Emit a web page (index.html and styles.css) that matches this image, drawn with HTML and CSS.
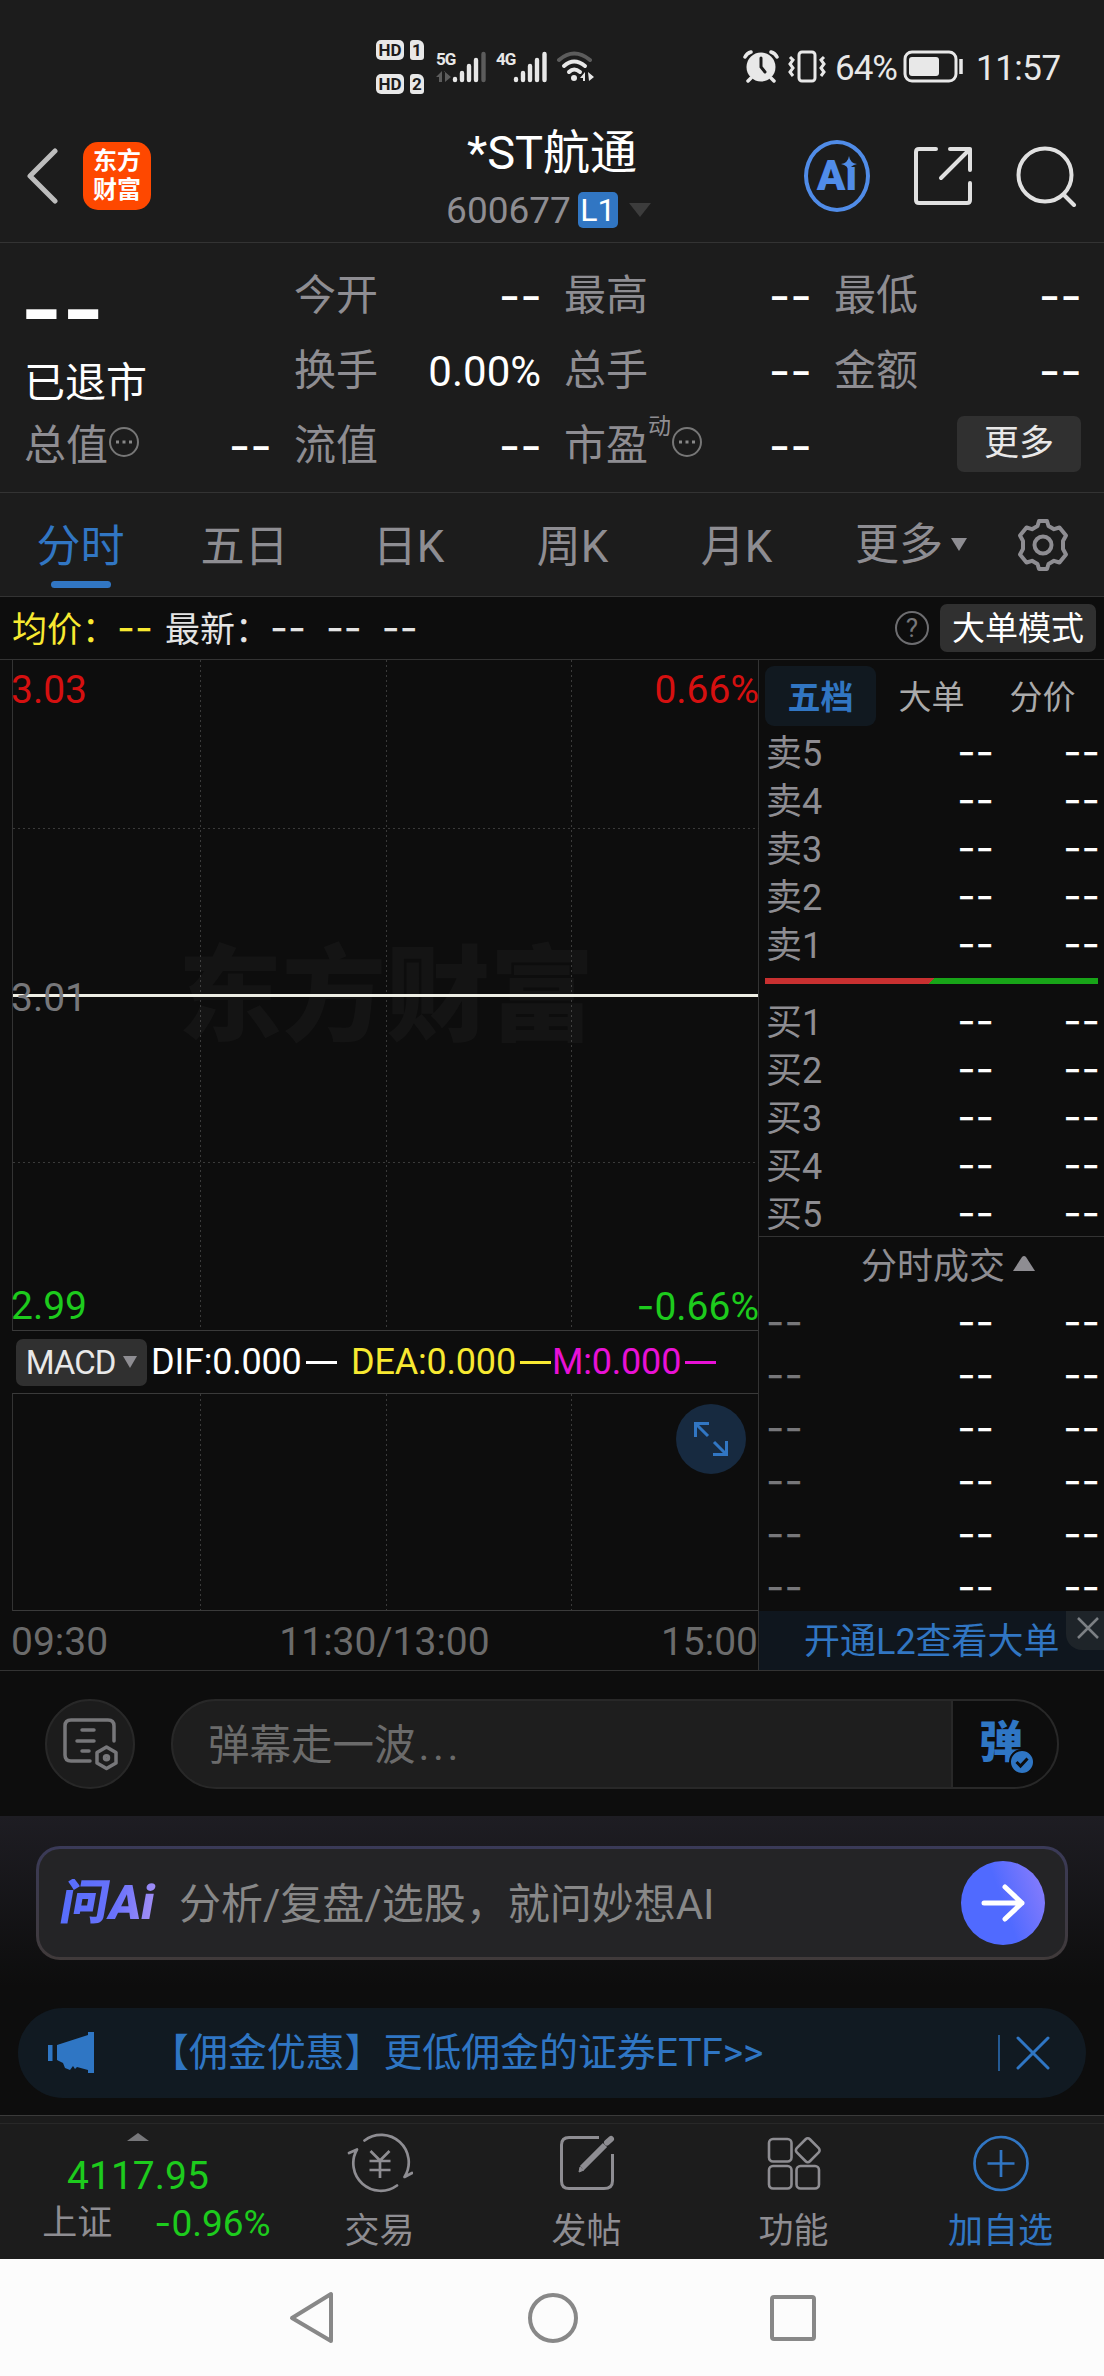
FILE: index.html
```html
<!DOCTYPE html>
<html lang="zh-CN">

<head>
  <meta charset="UTF-8">
  <title>*ST航通 600677</title>
  <link rel="stylesheet" href="styles.css">
</head>

<body>
  <!-- Status bar -->
  <div class="status-bar">
    <div class="hd-group">
      <div class="hd-row"><span class="hd">HD</span><span class="sim">1</span></div>
      <div class="hd-row"><span class="hd">HD</span><span class="sim">2</span></div>
    </div>
    <div class="signal">
      <div class="net"><span>5G</span>
        <svg width="15" height="12" viewBox="0 0 15 12" fill="#5c5c5c"><path d="M0 6L6 0V11H3V6ZM8 0L15 6L9 11V0Z"/></svg>
      </div>
      <svg width="34" height="32" viewBox="0 0 34 32" stroke="#e8e8e8" stroke-width="4.4" stroke-linecap="round">
        <path d="M3 28V29M10 22V29M17 15V29M24 9V29"/><path d="M31.500 3V29" stroke="#5c5c5c"/>
      </svg>
    </div>
    <div class="signal signal-4g">
      <div class="net"><span>4G</span></div>
      <svg width="34" height="32" viewBox="0 0 34 32" stroke="#e8e8e8" stroke-width="4.4" stroke-linecap="round">
        <path d="M3 28V29M10 22V29M17 15V29M24 9V29M31.500 3V29"/>
      </svg>
    </div>
    <svg class="wifi" width="40" height="34" viewBox="0 0 40 34" fill="none" stroke="#e8e8e8" stroke-width="4" stroke-linecap="round">
      <path d="M3 10Q18-3 34 10" stroke="#5c5c5c"/>
      <path d="M8 16Q18 7 29 16M13 22Q18 17 24 22"/>
      <circle cx="18" cy="28" r="3" fill="#e8e8e8" stroke="none"/>
      <path d="M24 28L29 22V31H27V28ZM32 22L38 27L33 31Z" fill="#e8e8e8" stroke="none"/>
    </svg>
    <div class="status-right">
      <svg width="36" height="34" viewBox="0 0 36 34" fill="none" stroke="#e8e8e8" stroke-width="3.5" stroke-linecap="round">
        <circle cx="18" cy="17" r="14.500" fill="#e8e8e8" stroke="none"/>
        <path d="M8 28L5 31M28 28L31 31M2 7Q4 3 8 2M34 7Q32 3 28 2"/>
        <path d="M18 8V17L22 22" stroke="#1c1c1c" stroke-width="3"/>
      </svg>
      <svg width="40" height="34" viewBox="0 0 40 34" fill="none" stroke="#e8e8e8" stroke-width="3">
        <rect x="12" y="2" width="16" height="29" rx="3"/>
        <path d="M3 7L6 10L3 14L6 18L3 22L6 26M37 7L34 10L37 14L34 18L37 22L34 26"/>
      </svg>
      <span class="pct">64%</span>
      <svg width="61" height="34" viewBox="0 0 61 34">
        <rect x="2" y="2" width="51" height="29" rx="7" fill="none" stroke="#e8e8e8" stroke-width="3"/>
        <rect x="6" y="7" width="30" height="19" rx="3" fill="#e8e8e8"/>
        <path d="M58 9V24" stroke="#e8e8e8" stroke-width="3.5"/>
      </svg>
      <span class="clock">11:57</span>
    </div>
  </div>

  <!-- Title bar -->
  <header class="header">
    <div class="header-left">
      <svg width="32" height="56" viewBox="0 0 32 56" fill="none" stroke="#bdbdbd" stroke-width="5" stroke-linecap="round" stroke-linejoin="round"><path d="M29 3L4 28L29 53"/></svg>
      <div class="logo"><span>东方</span><span>财富</span></div>
    </div>
    <div class="title">
      <h1>*ST航通</h1>
      <div class="code"><span>600677</span><span class="l1">L1</span>
        <svg width="24" height="16" viewBox="0 0 24 16"><path d="M1 1H23L12 15Z" fill="#3c3c3c"/></svg>
      </div>
    </div>
    <div class="header-right">
      <div class="ai-circle"><span>Aı</span>
        <svg class="spark" width="16" height="16" viewBox="0 0 16 16"><path d="M8 0Q9 7 16 8Q9 9 8 16Q7 9 0 8Q7 7 8 0Z" fill="#508ce8"/></svg>
      </div>
      <svg width="60" height="60" viewBox="0 0 60 60" fill="none" stroke="#e0e0e0" stroke-width="4" stroke-linecap="round" stroke-linejoin="round">
        <path d="M23 3H6Q3 3 3 6V54Q3 57 6 57H54Q57 57 57 54V37M37 3H57V24M57 3L28 32"/>
      </svg>
      <svg width="62" height="62" viewBox="0 0 62 62" fill="none" stroke="#e0e0e0" stroke-width="4" stroke-linecap="round">
        <circle cx="29" cy="30" r="26.500"/><path d="M48 50L58 60"/>
      </svg>
    </div>
  </header>

  <!-- Quote -->
  <section class="quote">
    <div class="price">
      <span class="big-dash">--</span>
      <span class="delisted">已退市</span>
    </div>
    <div class="item"><label>今开</label><b class="dash">--</b></div>
    <div class="item"><label>最高</label><b class="dash">--</b></div>
    <div class="item"><label>最低</label><b class="dash">--</b></div>
    <div class="item"><label>换手</label><b>0.00%</b></div>
    <div class="item"><label>总手</label><b class="dash">--</b></div>
    <div class="item"><label>金额</label><b class="dash">--</b></div>
    <div class="item"><label>总值</label><svg class="dots" width="32" height="32" viewBox="0 0 32 32"><circle cx="16" cy="16" r="14" fill="none" stroke="#777" stroke-width="2"/><path d="M8 16H11M14.500 16H17.500M21 16H24" stroke="#888" stroke-width="3"/></svg><b class="dash">--</b></div>
    <div class="item"><label>流值</label><b class="dash">--</b></div>
    <div class="item"><label>市盈</label><sup>动</sup><svg class="dots" width="32" height="32" viewBox="0 0 32 32"><circle cx="16" cy="16" r="14" fill="none" stroke="#777" stroke-width="2"/><path d="M8 16H11M14.500 16H17.500M21 16H24" stroke="#888" stroke-width="3"/></svg><b class="dash">--</b></div>
    <div class="item"><button class="more-btn">更多</button></div>
  </section>

  <!-- Period tabs -->
  <nav class="tabs">
    <div class="tab active">分时</div>
    <div class="tab">五日</div>
    <div class="tab">日K</div>
    <div class="tab">周K</div>
    <div class="tab">月K</div>
    <div class="tab tab-more">更多<svg width="16" height="13" viewBox="0 0 16 13"><path d="M0 0H16L8 13Z" fill="#8e8d92"/></svg></div>
    <svg class="gear" width="54" height="54" viewBox="0 0 54 54" fill="none" stroke="#8e8d92" stroke-width="4" stroke-linejoin="round">
      <path d="M21.500 8L23 3H31L32.500 8L38 11.200L43.500 9.500L50 17.500L47 23V31L50 36.500L43.500 44.500L38 42.800L32.500 46L31 51H23L21.500 46L16 42.800L10.500 44.500L4 36.500L7 31V23L4 17.500L10.500 9.500L16 11.200Z"/>
      <circle cx="27" cy="27" r="8.500"/>
    </svg>
  </nav>

  <div class="info-row">
    <span class="avg">均价：<i>--</i></span>
    <span class="latest">最新：<i>--</i><i>--</i><i>--</i></span>
    <span class="help">?</span>
    <button class="mode-btn">大单模式</button>
  </div>

  <main class="board">
    <!-- Charts -->
    <div class="charts">
      <div class="chart">
        <svg class="grid" width="746" height="670" viewBox="0 0 746 670" fill="none">
          <g stroke="#3a3a3a" stroke-dasharray="2 3">
            <path d="M187.500 0V670M373.500 0V670M558.500 0V670M0 168.500H746M0 502.500H746"/>
          </g>
          <path d="M0 335.500H745" stroke="#eeeee4" stroke-width="3"/>
        </svg>
        <div class="watermark">东方财富</div>
        <div class="chart-row up"><span>3.03</span><span>0.66%</span></div>
        <div class="chart-row mid"><span>3.01</span></div>
        <div class="chart-row down"><span>2.99</span><span><i class="minus">-</i>0.66%</span></div>
      </div>
      <div class="macd">
        <button class="macd-btn">MACD<svg width="14" height="12" viewBox="0 0 14 12"><path d="M0 0H14L7 12Z" fill="#8e8d92"/></svg></button>
        <span class="dif">DIF:0.000<i class="rule"></i></span>
        <span class="dea">DEA:0.000<i class="rule"></i></span>
        <span class="m">M:0.000<i class="rule"></i></span>
      </div>
      <div class="subchart">
        <svg class="grid" width="746" height="217" viewBox="0 0 746 217">
          <path d="M187.500 0V217M373.500 0V217M558.500 0V217" stroke="#3a3a3a" stroke-dasharray="2 3"/>
        </svg>
        <div class="expand">
          <svg width="36" height="36" viewBox="0 0 36 36" fill="none" stroke="#3176c3" stroke-width="3"><path d="M2.500 16V2.500H16M3 3L15 15M33.500 20V33.500H20M33 33L21 21"/></svg>
        </div>
      </div>
      <div class="times"><span>09:30</span><span>11:30/13:00</span><span>15:00</span></div>
    </div>

    <!-- Order book -->
    <div class="book">
      <div class="book-tabs"><span class="on">五档</span><span>大单</span><span>分价</span></div>
      <div class="level"><span>卖5</span><i>--</i><i>--</i></div>
      <div class="level"><span>卖4</span><i>--</i><i>--</i></div>
      <div class="level"><span>卖3</span><i>--</i><i>--</i></div>
      <div class="level"><span>卖2</span><i>--</i><i>--</i></div>
      <div class="level"><span>卖1</span><i>--</i><i>--</i></div>
      <div class="ratio"></div>
      <div class="level"><span>买1</span><i>--</i><i>--</i></div>
      <div class="level"><span>买2</span><i>--</i><i>--</i></div>
      <div class="level"><span>买3</span><i>--</i><i>--</i></div>
      <div class="level"><span>买4</span><i>--</i><i>--</i></div>
      <div class="level"><span>买5</span><i>--</i><i>--</i></div>
      <div class="deals-title">分时成交<svg width="22" height="15" viewBox="0 0 22 15"><path d="M0 15L9 1Q11-1 13 1L22 15Z" fill="#8e8d92"/></svg></div>
      <div class="deal"><i class="t">--</i><i>--</i><i>--</i></div>
      <div class="deal"><i class="t">--</i><i>--</i><i>--</i></div>
      <div class="deal"><i class="t">--</i><i>--</i><i>--</i></div>
      <div class="deal"><i class="t">--</i><i>--</i><i>--</i></div>
      <div class="deal"><i class="t">--</i><i>--</i><i>--</i></div>
      <div class="deal"><i class="t">--</i><i>--</i><i>--</i></div>
      <div class="l2">开通L2查看大单
        <div class="l2-close"><svg width="22" height="22" viewBox="0 0 22 22" stroke="#7c8084" stroke-width="2.5"><path d="M1 1L21 21M21 1L1 21"/></svg></div>
      </div>
    </div>
  </main>

  <!-- Bullet comments -->
  <div class="danmu">
    <div class="danmu-set">
      <svg width="56" height="54" viewBox="0 0 56 54" fill="none" stroke="#77777a" stroke-width="3.5" stroke-linecap="round" stroke-linejoin="round">
        <path d="M52 24V9Q52 3 46 3H9Q3 3 3 9V38Q3 44 9 44H28M20 13H32M15 24H32M20 34H27"/>
        <path d="M44.500 30L54 35.500V46L44.500 51.500L35 46V35.500Z"/><circle cx="44.500" cy="40.800" r="2"/>
      </svg>
    </div>
    <div class="danmu-input">
      <span class="placeholder">弹幕走一波<i>...</i></span>
      <div class="danmu-btn"><b>弹</b>
        <svg class="check" width="26" height="26" viewBox="0 0 26 26"><circle cx="13" cy="13" r="12" fill="#2f76c4" stroke="#0d0d0d" stroke-width="2"/><path d="M7.500 13L11.500 17L18.500 9.500" fill="none" stroke="#0d0d0d" stroke-width="3"/></svg>
      </div>
    </div>
  </div>

  <section class="ask">
    <!-- AI search -->
    <div class="ask-card">
      <b class="ask-logo">问Ai</b>
      <span class="ask-text">分析/复盘/选股，就问妙想AI</span>
      <div class="go"><svg width="44" height="38" viewBox="0 0 44 38" fill="none" stroke="#fff" stroke-width="5" stroke-linecap="round" stroke-linejoin="round"><path d="M3 19H41M24 3L41 19L24 35"/></svg></div>
    </div>
    <!-- Promotion -->
    <div class="promo">
      <svg width="46" height="42" viewBox="0 0 46 42" fill="#2f76c4"><path d="M0 13H4.500V29H0ZM9 13L40 3V0H46V41H40V38L29 35L27 37L25 34L22 38L17 36L15 31L9 28Z"/></svg>
      <span class="promo-text">【佣金优惠】更低佣金的证券ETF&gt;&gt;</span>
      <i class="sep"></i>
      <svg width="34" height="34" viewBox="0 0 34 34" stroke="#2f76c4" stroke-width="3" stroke-linecap="round"><path d="M2 2L32 32M32 2L2 32"/></svg>
    </div>
  </section>

  <!-- Bottom bar -->
  <footer class="bottom">
    <div class="index">
      <svg width="22" height="8" viewBox="0 0 22 8"><path d="M0 8L11 0L22 8Z" fill="#77777a"/></svg>
      <span class="index-value">4117.95</span>
      <div class="index-row"><span>上证</span><span class="index-pct"><i class="minus">-</i>0.96%</span></div>
    </div>
    <div class="action">
      <svg width="66" height="60" viewBox="0 0 66 60" fill="none" stroke="#8e8d92" stroke-width="2.7" stroke-linecap="round" stroke-linejoin="round">
        <path d="M17.500 7.500A27.500 27.500 0 0 1 57.500 44L65 40M2 20L10 16.500A27.500 27.500 0 0 0 50 52.500"/>
        <path d="M23.500 18L33 27.500L42.500 18M33 27.500V45M22.500 28H43.500M22.500 37H43.500" stroke-linecap="butt"/>
      </svg>
      <span>交易</span>
    </div>
    <div class="action">
      <svg width="58" height="60" viewBox="0 0 58 60" fill="none" stroke="#8e8d92" stroke-width="3">
        <path d="M41 4.500H11Q3.500 4.500 3.500 12V48Q3.500 55.500 11 55.500H46Q54.500 55.500 54.500 48V21"/>
        <path d="M24 35L47 12" stroke-width="6"/><path d="M49 9.500L53 6" stroke-width="6" stroke-linecap="round"/>
        <path d="M21 39L22 34L26 37Z" fill="#8e8d92" stroke-width="1"/>
      </svg>
      <span>发帖</span>
    </div>
    <div class="action">
      <svg width="54" height="60" viewBox="0 0 54 60" fill="none" stroke="#8e8d92" stroke-width="2.6" stroke-linejoin="round">
        <rect x="2" y="6" width="22.500" height="22.500" rx="4"/><rect x="2" y="33" width="22.500" height="22.500" rx="4"/><rect x="29.500" y="33" width="22.500" height="22.500" rx="4"/>
        <rect x="31.500" y="8" width="18.500" height="18.500" rx="3" transform="rotate(45 40.750 17.250)"/>
      </svg>
      <span>功能</span>
    </div>
    <div class="action add">
      <svg width="60" height="60" viewBox="0 0 60 60" fill="none" stroke="#3176c3" stroke-width="2.7"><circle cx="30" cy="30.500" r="26.500"/><path d="M30 17V44M16.500 30.500H43.500"/></svg>
      <span>加自选</span>
    </div>
  </footer>

  <!-- System navigation -->
  <div class="sysnav">
    <svg width="46" height="56" viewBox="0 0 46 56" fill="none" stroke="#888" stroke-width="4" stroke-linejoin="round"><path d="M42 4V51L3 28Z"/></svg>
    <svg width="52" height="52" viewBox="0 0 52 52" fill="none" stroke="#888" stroke-width="4"><circle cx="26" cy="26" r="23"/></svg>
    <svg width="46" height="46" viewBox="0 0 46 46" fill="none" stroke="#888" stroke-width="4"><rect x="2" y="2" width="42" height="42" rx="2"/></svg>
  </div>
</body>

</html>
```

FILE: styles.css
```css
* {
  box-sizing: border-box;
}

body {
  margin: 0;
  width: 1104px;
  height: 2376px;
  background: #0d0d0d;
  color: #fff;
  font-family: Roboto, "Noto Sans CJK SC", sans-serif;
  line-height: 1;
  overflow: hidden;
}

svg {
  display: block;
  flex: none;
}

span,
label,
button {
  white-space: nowrap;
}

i {
  font-style: normal;
}

button {
  border: none;
  padding: 0;
  font-family: inherit;
  line-height: 1;
  background: #303030;
  color: #e8e8e8;
  border-radius: 7px;
}

.minus {
  font-family: Inter, sans-serif;
}

/* Status bar */
.status-bar {
  display: flex;
  height: 112px;
  padding: 40px 0 0 376px;
  background: #1c1c1c;
  color: #e8e8e8;
}

.hd-group {
  display: flex;
  flex-direction: column;
  gap: 14px;
}

.hd-row {
  display: flex;
  gap: 6px;
}

.hd,
.sim {
  height: 20px;
  font-size: 17px;
  line-height: 21px;
  font-weight: 700;
  text-align: center;
  background: #e8e8e8;
  color: #1c1c1c;
  border-radius: 5px;
}

.hd {
  width: 28px;
}

.sim {
  width: 14px;
  border-radius: 3px 6px 3px 3px;
}

.signal {
  display: flex;
  margin: 11px 0 0 12px;
}

.net {
  width: 16px;
  font-size: 17px;
  font-weight: 700;
  letter-spacing: -1px;
}

.net svg {
  margin-top: 3px;
}

.signal-4g {
  margin-left: 10px;
}

.signal-4g .net {
  width: 17px;
}

.wifi {
  margin: 10px 0 0 9px;
}

.status-right {
  display: flex;
  align-items: center;
  height: 34px;
  margin: 10px 0 0 147px;
}

.pct {
  width: 66px;
  margin: 2px 2px 0 8px;
  font-size: 35px;
  letter-spacing: -1px;
}

.status-right svg + svg {
  margin-left: 8px;
}

.clock {
  margin: 2px 0 0 12px;
  font-size: 35px;
  letter-spacing: -.5px;
}

/* Title bar */
.header {
  display: grid;
  grid-template-columns: 300px 1fr 300px;
  height: 131px;
  background: #1c1c1c;
  border-bottom: 1px solid #333;
}

.header-left {
  display: flex;
  align-items: center;
  height: 127px;
  padding-left: 26px;
}

.logo {
  display: flex;
  flex-direction: column;
  align-items: center;
  justify-content: center;
  width: 68px;
  height: 68px;
  margin-left: 25px;
  background: #fe4800;
  border-radius: 15px;
  font-size: 24px;
  font-weight: 700;
  line-height: 29px;
}

.title {
  display: flex;
  flex-direction: column;
  align-items: center;
  padding-top: 14px;
}

.title h1 {
  margin: 0;
  font-size: 47px;
  font-weight: 400;
  line-height: 54px;
}

.code {
  display: flex;
  align-items: center;
  height: 36px;
  margin: 12px 0 0 -6px;
  font-size: 37px;
  color: #8e8d92;
}

.l1 {
  width: 40px;
  height: 36px;
  margin: 0 10px 0 7px;
  border-radius: 5px;
  background: #3176c3;
  color: #fff;
  font-size: 32px;
  line-height: 37px;
  text-align: center;
}

.header-right {
  display: flex;
  align-items: center;
  justify-content: flex-end;
  height: 127px;
  padding-right: 26px;
  gap: 43px;
}

.ai-circle {
  position: relative;
  width: 72px;
  height: 72px;
  border: 4px solid #508ce8;
  border-radius: 50%;
  color: #508ce8;
  font-size: 42px;
  font-weight: 900;
  line-height: 64px;
  text-align: center;
}

.spark {
  position: absolute;
  right: 9px;
  top: 12px;
}

/* Quote */
.quote {
  display: grid;
  grid-template-columns: repeat(4, 244px);
  grid-template-rows: repeat(3, 75px);
  column-gap: 26px;
  height: 250px;
  padding: 15px 26px 0 24px;
  background: #1c1c1c;
  border-bottom: 1px solid #333;
}

.price {
  grid-row: 1 / 3;
  display: flex;
  flex-direction: column;
}

.big-dash {
  height: 101px;
  margin-left: -4px;
  font-family: Inter, sans-serif;
  font-size: 92px;
  font-weight: 600;
  line-height: 101px;
  letter-spacing: -1px;
}

.delisted {
  font-size: 41px;
  line-height: 48px;
}

.item {
  display: flex;
  align-items: center;
  font-size: 42px;
}

.item label {
  color: #8e8d92;
}

.item b {
  margin: 2px -3px 0 auto;
  font-weight: 400;
}

.item .dash {
  margin: 0 -4px 0 auto;
  font-family: Inter, sans-serif;
  font-size: 47px;
}

.item sup {
  align-self: flex-start;
  margin-top: 7px;
  font-size: 23px;
  color: #8e8d92;
}

.dots {
  margin-bottom: 8px;
}

.more-btn {
  width: 124px;
  height: 56px;
  margin: 0 -3px 4px auto;
  font-size: 35px;
}

/* Period tabs */
.tabs {
  display: flex;
  height: 104px;
  background: #1c1c1c;
  border-bottom: 1px solid #333;
  color: #8e8d92;
  font-size: 44px;
}

.tab {
  position: relative;
  width: 164px;
  padding-right: 3px;
  line-height: 108px;
  text-align: center;
}

.tab.active {
  color: #3176c3;
}

.tab.active::after {
  content: "";
  position: absolute;
  left: 51px;
  bottom: 8px;
  width: 60px;
  height: 7px;
  border-radius: 4px;
  background: #3176c3;
}

.tab-more {
  display: flex;
  align-items: center;
  width: 192px;
  padding-left: 35px;
  gap: 8px;
}

.gear {
  margin: 25px 0 0 4px;
}

.info-row {
  display: flex;
  align-items: center;
  height: 63px;
  padding: 0 8px 0 12px;
  border-bottom: 1px solid #333;
  font-size: 35px;
}

.info-row i {
  font-family: Inter, sans-serif;
  font-size: 39px;
}

.avg {
  width: 153px;
  color: #f8e931;
}

.latest {
  color: #e4e4e4;
}

.latest i + i {
  margin-left: 20px;
}

.help {
  width: 34px;
  height: 34px;
  margin: 0 11px 0 auto;
  border: 2px solid #6d6d70;
  border-radius: 50%;
  color: #77777a;
  font-size: 26px;
  line-height: 31px;
  text-align: center;
}

.mode-btn {
  width: 156px;
  height: 48px;
  color: #fff;
  font-size: 33px;
}

/* Charts */
.board {
  display: grid;
  grid-template-columns: 758px 346px;
  height: 1011px;
  border-bottom: 1px solid #333;
}

.charts {
  padding-left: 12px;
}

.chart,
.subchart {
  position: relative;
  width: 746px;
  border-left: 1px solid #333;
  border-bottom: 1px solid #3a3a3a;
}

.grid {
  position: absolute;
  left: 0;
  top: 0;
}

.chart {
  display: flex;
  flex-direction: column;
  justify-content: space-between;
  height: 671px;
  padding: 10px 0 3px;
  font-size: 39px;
}

.chart-row {
  position: relative;
  display: flex;
  justify-content: space-between;
  left: -2px;
  width: 748px;
  line-height: 40px;
}

.up {
  color: #d51010;
}

.mid {
  color: #77777a;
}

.down {
  color: #1dcb1d;
}

.watermark {
  position: absolute;
  left: 165px;
  top: 283px;
  color: rgba(255, 255, 255, .03);
  font-size: 104px;
  font-weight: 900;
  line-height: 110px;
}

.macd {
  display: flex;
  align-items: center;
  height: 62px;
  padding-left: 4px;
  font-size: 36px;
  letter-spacing: -.2px;
}

.macd-btn {
  display: flex;
  align-items: center;
  justify-content: center;
  gap: 8px;
  width: 131px;
  height: 47px;
  margin-right: 4px;
  font-size: 33px;
  letter-spacing: -1px;
}

.macd span {
  display: flex;
  align-items: center;
}

.rule {
  width: 31px;
  height: 3px;
  margin-left: 4px;
  background: currentColor;
}

.dif {
  width: 200px;
}

.dea {
  width: 201px;
  color: #f8e931;
}

.m {
  color: #e811d6;
}

.subchart {
  height: 218px;
  border-top: 1px solid #3a3a3a;
}

.expand {
  position: absolute;
  right: 12px;
  top: 10px;
  display: flex;
  align-items: center;
  justify-content: center;
  width: 70px;
  height: 70px;
  border-radius: 50%;
  background: #172a40;
}

.times {
  display: flex;
  justify-content: space-between;
  height: 58px;
  margin-left: -1px;
  font-size: 39px;
  line-height: 62px;
  color: #6b6b6b;
}

/* Order book */
.book {
  border-left: 1px solid #333;
}

.book i {
  padding-bottom: 4px;
  font-family: Inter, sans-serif;
  font-size: 40px;
}

.book-tabs {
  display: flex;
  height: 70px;
  padding: 6px 0 4px 6px;
  font-size: 33px;
  color: #aaa;
}

.book-tabs span {
  width: 111px;
  line-height: 64px;
  text-align: center;
}

.book-tabs .on {
  border-radius: 9px;
  background: #111920;
  color: #3176c3;
  font-weight: 700;
}

.level,
.deal {
  display: grid;
  grid-template-columns: 1fr 100px 106px;
  align-items: center;
  height: 48px;
  padding: 0 4px 0 7px;
  text-align: right;
}

.level span {
  color: #8e8d92;
  font-size: 36px;
  text-align: left;
}

.ratio {
  height: 6px;
  margin: 8px 6px 15px;
  background: linear-gradient(135deg, #c83030 50%, #18a418 50%);
}

.deals-title {
  display: flex;
  justify-content: flex-end;
  align-items: center;
  gap: 8px;
  height: 61px;
  margin-top: -3px;
  padding-right: 69px;
  border-top: 1px solid #333;
  color: #8e8d92;
  font-size: 36px;
}

.deals-title svg {
  margin-bottom: 7px;
}

.deal {
  height: 53px;
}

.deal .t {
  color: #77777a;
  text-align: left;
}

.l2 {
  position: relative;
  height: 59px;
  margin-top: -4px;
  padding-left: 45px;
  background: #0f161e;
  color: #3176c3;
  font-size: 36px;
  line-height: 63px;
}

.l2-close {
  position: absolute;
  right: 0;
  top: 0;
  width: 38px;
  height: 39px;
  padding: 6px 0 0 11px;
  border-bottom-left-radius: 16px;
  background: #1e2429;
}

/* Bullet comments */
.danmu {
  display: flex;
  align-items: center;
  gap: 36px;
  height: 145px;
  padding: 1px 45px 0;
}

.danmu-set {
  display: flex;
  align-items: center;
  justify-content: center;
  width: 90px;
  height: 90px;
  border: 2px solid #282828;
  border-radius: 50%;
  background: #1c1c1c;
}

.danmu-input {
  display: flex;
  align-items: center;
  width: 888px;
  height: 90px;
  border: 2px solid #282828;
  border-radius: 45px;
  background: #1e1e1e;
  color: #6b6b6b;
  font-size: 41.500px;
  overflow: hidden;
  padding-left: 35px;
}

.placeholder {
  margin-top: 3px;
}

.placeholder i {
  margin-left: 3px;
  letter-spacing: 3.500px;
}

.danmu-btn {
  position: relative;
  width: 106px;
  height: 86px;
  margin-left: auto;
  padding-left: 26px;
  border-left: 2px solid #282828;
  background: #0d0d0d;
  color: #2f76c4;
  font-size: 44px;
  line-height: 84px;
}

.danmu-btn b {
  font-weight: 900;
}

.check {
  position: absolute;
  left: 56px;
  top: 48px;
}

/* AI search */
.ask {
  height: 299px;
  padding-top: 30px;
  background: linear-gradient(#1e1d23, #0d0d0d 170px);
}

.ask-card {
  display: flex;
  align-items: center;
  width: 1032px;
  height: 114px;
  margin: 0 auto 48px;
  padding: 0 20px 0 22px;
  border: 3px solid transparent;
  border-radius: 24px;
  background: linear-gradient(#242426, #242426) padding-box, linear-gradient(#3a3a58, #403a3a) border-box;
}

.ask-logo {
  width: 100px;
  margin-right: 18px;
  transform: skewX(-10deg);
  background: linear-gradient(90deg, #566dfb, #6a72fb 55%, #ab93f5);
  -webkit-background-clip: text;
  background-clip: text;
  color: transparent;
  font-size: 48px;
  font-weight: 900;
  white-space: nowrap;
}

.ask-text {
  margin-top: 3px;
  color: #888;
  font-size: 42px;
}

.go {
  display: flex;
  align-items: center;
  justify-content: center;
  width: 84px;
  height: 84px;
  margin-left: auto;
  border-radius: 50%;
  background: linear-gradient(70deg, #506aff 50%, #8f7ffb);
}

.promo {
  display: flex;
  align-items: center;
  width: 1068px;
  height: 90px;
  margin: 0 auto;
  padding: 0 36px 0 30px;
  border-radius: 45px;
  background: #111a22;
  color: #2f76c4;
  font-size: 39px;
}

.promo-text {
  margin-left: 56px;
  letter-spacing: -.1px;
}

.sep {
  width: 2px;
  height: 36px;
  margin: 0 16px 0 auto;
  background: #245a94;
}

/* Bottom bar */
.bottom {
  display: flex;
  height: 144px;
  border-top: 1px solid #3a3a3a;
  background: linear-gradient(#1c1c1c 7px, #282828 7px, #282828 8px, #1c1c1c 8px);
  color: #8e8d92;
  font-size: 35px;
}

.index {
  display: flex;
  flex-direction: column;
  align-items: center;
  width: 276px;
  padding-top: 17px;
  color: #1dcb1d;
}

.index-value {
  margin-top: 16px;
  font-size: 39px;
}

.index-row {
  display: flex;
  align-items: center;
  gap: 42px;
  margin: 8px 0 0 37px;
  font-size: 37px;
}

.index-row span:first-child {
  color: #8e8d92;
  font-size: 35px;
}

.action {
  display: flex;
  flex-direction: column;
  align-items: center;
  width: 207px;
  padding-top: 17px;
}

.action span {
  margin-top: 21px;
}

.add {
  color: #3176c3;
}

/* System navigation */
.sysnav {
  display: flex;
  align-items: center;
  justify-content: space-between;
  height: 117px;
  padding: 0 288px 0 289px;
  background: #fcfcfc;
}
```
